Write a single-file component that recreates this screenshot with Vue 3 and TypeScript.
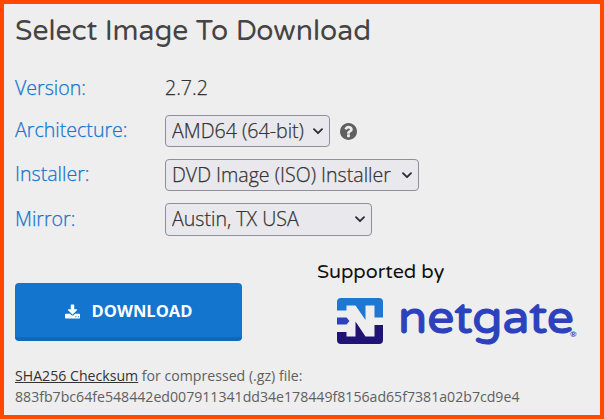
<script setup lang="ts">
import { ref } from 'vue'

interface Field {
  key: string
  label: string
  options: string[]
  help?: boolean
}

const version = '2.7.2'
const fields: Field[] = [
  { key: 'architecture', label: 'Architecture:', options: ['AMD64 (64-bit)'], help: true },
  { key: 'installer', label: 'Installer:', options: ['DVD Image (ISO) Installer'] },
  { key: 'mirror', label: 'Mirror:', options: ['Austin, TX USA'] },
]
const selected = ref<Record<string, string>>(
  Object.fromEntries(fields.map((f) => [f.key, f.options[0]])),
)
const checksum = '883fb7bc64fe548442ed007911341dd34e178449f8156ad65f7381a02b7cd9e4'
</script>

<template>
  <main class="panel">
    <h1 class="title">Select Image To Download</h1>

    <div class="form">
      <div class="row version">
        <span class="label">Version:</span>
        <span class="value">{{ version }}</span>
      </div>
      <div v-for="f in fields" :key="f.key" class="row" :class="f.key">
        <label class="label" :for="f.key">{{ f.label }}</label>
        <div class="picker">
          <select :id="f.key" v-model="selected[f.key]">
            <option v-for="o in f.options" :key="o">{{ o }}</option>
          </select>
          <svg class="chevron" viewBox="0 0 10 7" width="10" height="7">
            <path d="M1 1.2 5 5.2 9 1.2" fill="none" stroke="#2b2a33" stroke-width="1.8" stroke-linecap="round" stroke-linejoin="round" />
          </svg>
        </div>
        <svg v-if="f.help" class="help" viewBox="0 0 1536 1536" width="17" height="17">
          <path
            fill="#606060"
            d="M896 1248v-192q0-14-9-23t-23-9H672q-14 0-23 9t-9 23v192q0 14 9 23t23 9h192q14 0 23-9t9-23zm256-672q0-88-55.500-163T958 297t-170-41q-243 0-371 213-15 24 8 42l132 100q7 6 19 6 16 0 25-12 53-68 86-92 34-24 86-24 48 0 85.500 26t37.500 59q0 38-20 61t-68 45q-63 28-115.500 86.500T640 892v36q0 14 9 23t23 9h192q14 0 23-9t9-23q0-19 21.500-49.500T972 829q32-18 49-28.500t46-35 44.500-48 28-60.500 12.500-81zm384 192q0 209-103 385.500T1153.500 1433 768 1536t-385.500-103T103 1153.500 0 768t103-385.500T382.500 103 768 0t385.500 103T1433 382.500 1536 768z"
          />
        </svg>
      </div>
    </div>

    <div class="actions">
      <button class="download" type="button">
        <svg viewBox="0 0 1664 1536" width="15" height="15">
          <path
            fill="#fff"
            d="M1280 1344q0-26-19-45t-45-19-45 19-19 45 19 45 45 19 45-19 19-45zm256 0q0-26-19-45t-45-19-45 19-19 45 19 45 45 19 45-19 19-45zm128-224v320q0 40-28 68t-68 28H96q-40 0-68-28t-28-68v-320q0-40 28-68t68-28h465l135 136q58 56 136 56t136-56l136-136h464q40 0 68 28t28 68zm-325-569q17 41-14 70l-448 448q-18 19-45 19t-45-19L339 621q-31-29-14-70 17-39 59-39h256V64q0-26 19-45t45-19h256q26 0 45 19t19 45v448h256q42 0 59 39z"
          />
        </svg>
        <span>DOWNLOAD</span>
      </button>

      <div class="sponsor">
        <span class="supported">Supported by</span>
        <div class="brand">
          <svg class="mark" viewBox="0 0 46 46" width="46" height="46">
            <path fill="#1c78d2" d="M4 0H42Q46 0 46 4V19.500H37.500V7.500H28.500V22L18.500 7.500H9.500V12.500H0V4Q0 0 4 0Z" />
            <path fill="#2d41bd" d="M0 19.500H9.500L12.500 23 9.500 26.500H0Z" />
            <path fill="#211276" d="M0 34H9.500V38.500H18.500V23.500L28.500 38.500H37.500V27H46V42Q46 46 42 46H4Q0 46 0 42Z" />
          </svg>
          <svg class="wordmark" viewBox="0 0 182 50" width="182" height="50">
            <text class="name" x="0" y="34.5" textLength="176" lengthAdjust="spacingAndGlyphs">netgate</text>
            <text class="reg" x="172" y="39">®</text>
          </svg>
        </div>
      </div>
    </div>

    <p class="checksum">
      <a>SHA256 Checksum</a><span class="rest"> for compressed (.gz) file:</span><br />
      <span class="hash">{{ checksum }}</span>
    </p>
  </main>
</template>

<style>
body {
  margin: 0;
}
</style>

<style scoped>
.panel {
  box-sizing: border-box;
  width: 604px;
  height: 419px;
  overflow: hidden;
  border: 4px solid #ff4800;
  padding: 7px 11px 0;
  background: #eee;
  color: #333;
  font-family: "Open Sans", "Noto Sans", sans-serif;
}
.title {
  margin: 0;
  height: 40px;
  font: 400 28.3px/40px "Varela Round", Lato, sans-serif;
  color: #444;
  white-space: nowrap;
}
.form {
  display: flex;
  flex-direction: column;
  gap: 12px;
  padding-top: 20px;
}
.row {
  display: flex;
  align-items: center;
  height: 32px;
  font-size: 19.6px;
  font-weight: 300;
  -webkit-text-stroke-width: 0.25px;
}
.row.version {
  box-sizing: border-box;
  padding-top: 2px;
}
.row.mirror {
  height: 33px;
}
.label {
  width: 150px;
  line-height: 30px;
  padding-bottom: 2px;
  color: #1475cf;
}
.version .label {
  padding-bottom: 0;
}
.value {
  line-height: 30px;
  padding-bottom: 1px;
  color: #333;
}
.picker {
  display: grid;
  align-items: center;
  height: 100%;
}
.picker > * {
  grid-area: 1 / 1;
}
select {
  box-sizing: border-box;
  appearance: none;
  height: 100%;
  margin: 0;
  border: 1px solid #8f8f9d;
  border-radius: 4px;
  padding: 0 6px 1px;
  background: #e9e9ed;
  color: #333;
  font: inherit;
}
.architecture select {
  width: 165px;
}
.installer select {
  width: 254px;
}
.mirror select {
  width: 207px;
  padding-bottom: 2px;
}
.chevron {
  justify-self: end;
  margin-right: 7px;
  pointer-events: none;
}
.help {
  margin-left: 10px;
}
.actions {
  display: flex;
  height: 97px;
  padding-top: 22px;
}
.download {
  box-sizing: border-box;
  display: flex;
  align-items: center;
  justify-content: center;
  gap: 12px;
  width: 227px;
  height: 58px;
  margin: 25px 0 0;
  border: 0;
  border-bottom: 4px solid #1068b8;
  border-radius: 4px;
  padding: 2px 0 0;
  background: #1475cf;
  color: #fff;
  font: 700 16.5px/22px "Open Sans", sans-serif;
}
.sponsor {
  display: flex;
  flex-direction: column;
  padding-left: 75px;
}
.supported {
  height: 40px;
  font: 400 19.7px/28px "Varela Round", Lato, sans-serif;
  color: #111;
}
.brand {
  display: flex;
  gap: 15px;
  padding-left: 20px;
}
.wordmark {
  overflow: visible;
}
.name {
  fill: #2d41bd;
  stroke: #2d41bd;
  stroke-width: 1.2px;
  font: 400 46px "Varela Round", Lato, sans-serif;
}
.reg {
  fill: #2d41bd;
  font: 700 8px Lato, sans-serif;
}
.checksum {
  margin: 10px 0 0;
  font-size: 14.14px;
  line-height: 21px;
  color: #606060;
  white-space: nowrap;
}
.checksum a {
  color: #333;
  text-decoration: underline;
}
</style>
